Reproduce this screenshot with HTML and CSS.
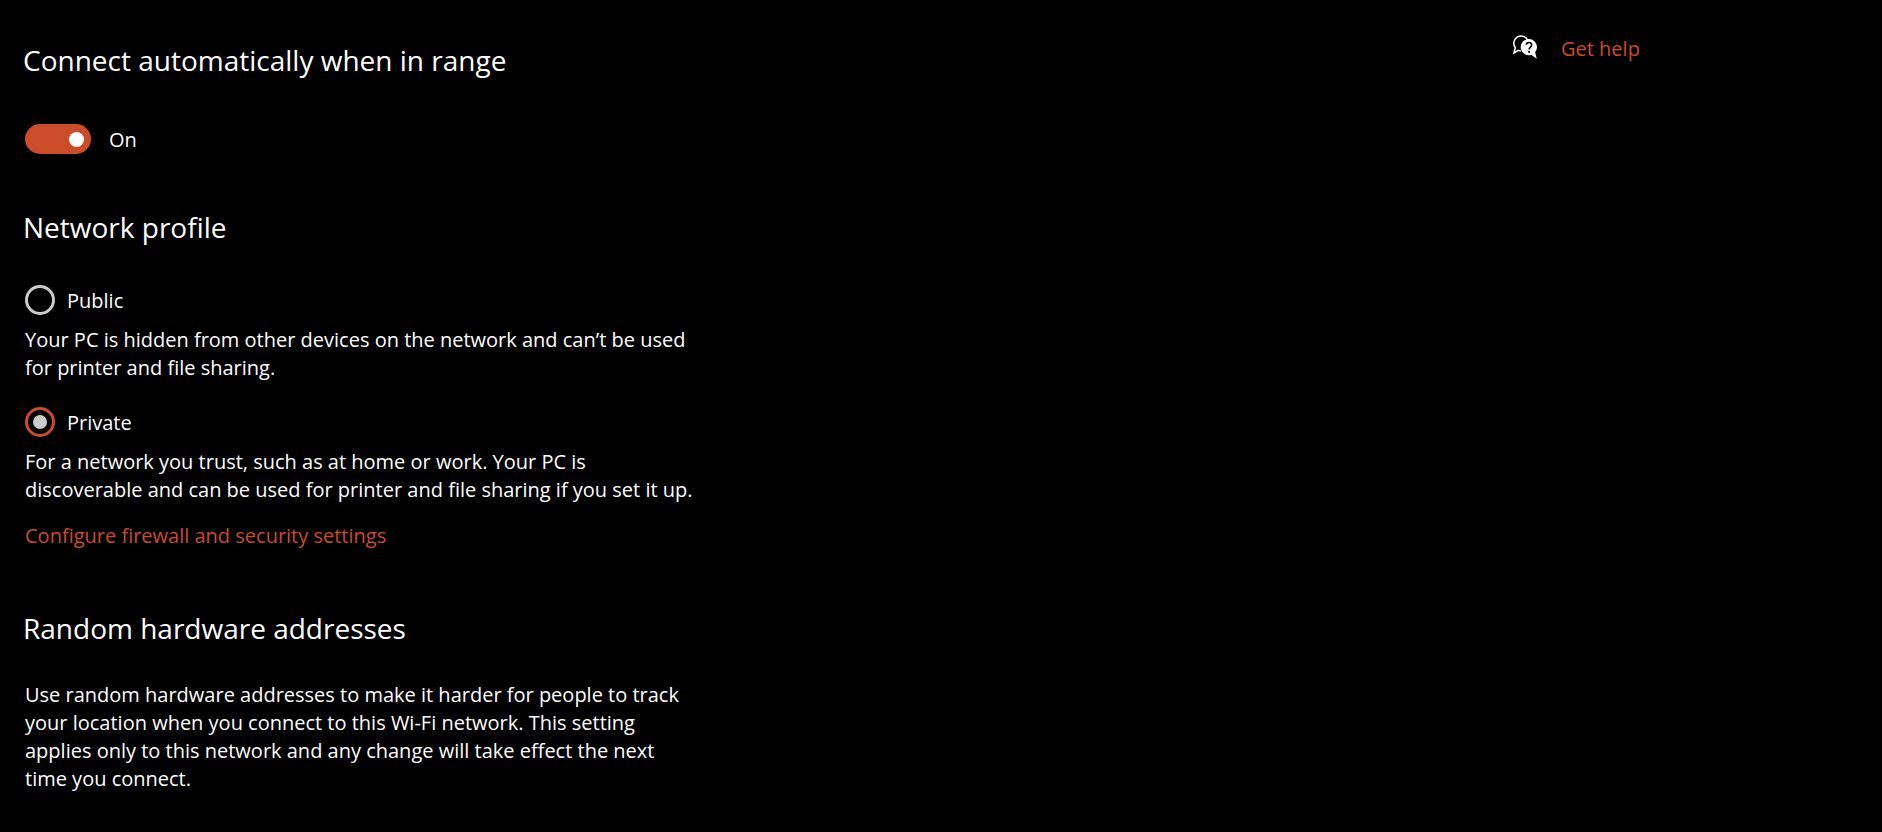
FILE: index.html
```html
<!DOCTYPE html>
<html lang="en">
<head>
<meta charset="utf-8">
<title>Network settings</title>
<link rel="stylesheet" href="styles.css">
</head>
<body>
<div class="page">
  <main class="settings">
    <section class="section">
      <h2 class="heading">Connect automatically when in range</h2>
      <label class="switch">
        <input class="switch-input" type="checkbox" role="switch" aria-label="Connect automatically when in range" checked>
        <span class="label">On</span>
      </label>
    </section>
    <section class="section profile">
      <h2 class="heading">Network profile</h2>
      <div class="option">
        <label class="choice"><input class="radio" type="radio" name="profile"><span class="label">Public</span></label>
        <p class="text">Your PC is hidden from other devices on the network and can’t be used for printer and file sharing.</p>
      </div>
      <div class="option">
        <label class="choice"><input class="radio" type="radio" name="profile" checked><span class="label">Private</span></label>
        <p class="text">For a network you trust, such as at home or work. Your PC is discoverable and can be used for printer and file sharing if you set it up.</p>
      </div>
      <a class="link" href="#firewall">Configure firewall and security settings</a>
    </section>
    <section class="section hardware">
      <h2 class="heading">Random hardware addresses</h2>
      <p class="text">Use random hardware addresses to make it harder for people to track your location when you connect to this Wi-Fi network. This setting applies only to this network and any change will take effect the next time you connect.</p>
    </section>
  </main>
  <aside class="help">
    <svg class="help-icon" viewBox="0 0 24 24" aria-hidden="true">
      <path d="M14.8 5.6A7.3 7.3 0 0 0 8.2.9a7.3 7.3 0 0 0-5.8 11.8L.9 18l4.4-2.6c.8.3 1.6.5 2.6.5" fill="none" stroke="#fff" stroke-width="1.5"/>
      <path d="M15.8 3.9a8.2 8.2 0 1 0 2.6 16l5.4 3.8-1.7-6.5a8.2 8.2 0 0 0-6.3-13.3z" fill="#fff"/>
      <path d="M13.3 9.8c.1-3 5.4-3.1 5.4 0 0 2.2-2.6 2.3-2.6 4.6" fill="none" stroke="#000" stroke-width="1.6"/>
      <circle cx="16.1" cy="16.8" r="1.1" fill="#000"/>
    </svg>
    <a class="link" href="#help">Get help</a>
  </aside>
</div>
</body>
</html>
```
FILE: styles.css
```css
* {
  box-sizing: border-box;
}

body {
  margin: 0;
  background: #000;
  color: #fff;
  font: 20px/28px "Segoe UI", "Open Sans", sans-serif;
}

.page {
  display: grid;
  grid-template-columns: minmax(0, 1fr) 369px;
  padding: 40px 0;
}

.settings {
  padding-left: 25px;
}

.section {
  display: flex;
  flex-direction: column;
  align-items: flex-start;
}

.heading {
  margin: 0 0 0 -2px;
  font-size: 28px;
  line-height: 40px;
  font-weight: 400;
}

.text {
  margin: 0;
  max-width: 676px;
}

.link {
  color: #cc4b28;
  text-decoration: none;
}

.label {
  padding-top: 2px;
}

.switch {
  display: flex;
  align-items: center;
  gap: 18px;
  margin-top: 44px;
}

.switch-input {
  appearance: none;
  display: flex;
  align-items: center;
  justify-content: flex-end;
  width: 66px;
  height: 30px;
  margin: 0;
  padding-right: 7px;
  border-radius: 15px;
  background: #cc4b28;
}

.switch-input::before {
  content: "";
  width: 15px;
  height: 15px;
  border-radius: 50%;
  background: #fff;
}

.switch-input:not(:checked) {
  justify-content: flex-start;
  padding-left: 7px;
}

.profile {
  margin-top: 53px;
}

.profile .heading {
  margin-bottom: 38px;
}

.option {
  margin-bottom: 25px;
}

.option:last-of-type {
  margin-bottom: 18px;
}

.choice {
  display: flex;
  align-items: center;
  gap: 12px;
  margin-bottom: 11px;
}

.radio {
  appearance: none;
  display: grid;
  place-items: center;
  width: 30px;
  height: 30px;
  margin: 0;
  border: 3px solid #ccc;
  border-radius: 50%;
}

.radio:checked {
  border-color: #cc4b28;
}

.radio:checked::before {
  content: "";
  width: 14px;
  height: 14px;
  border-radius: 50%;
  background: #ccc;
}

.hardware {
  margin-top: 58px;
}

.hardware .text {
  margin-top: 33px;
}

.help {
  display: flex;
  align-items: flex-start;
  align-self: start;
  gap: 24px;
  margin-top: -5px;
}

.help-icon {
  width: 24px;
  height: 24px;
}
```
